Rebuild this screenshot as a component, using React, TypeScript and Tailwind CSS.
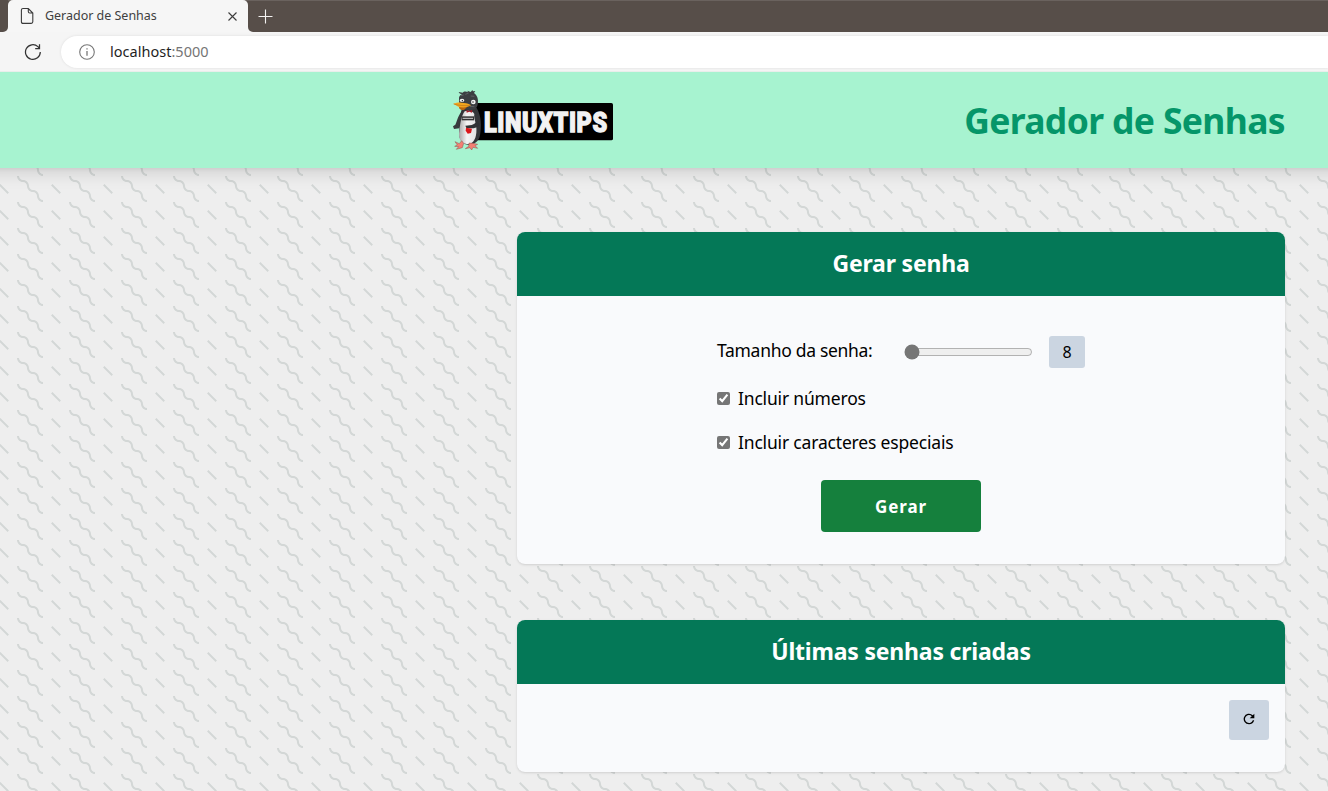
import React from "react";

function WigglePattern() {
  return (
    <svg className="absolute inset-0 h-full w-full" aria-hidden="true">
      <defs>
        <pattern id="wiggle" x="17" y="0" width="52" height="26" patternUnits="userSpaceOnUse">
          <path
            fill="#d3d7d6"
            d="M10 10c0-2.21-1.79-4-4-4-3.314 0-6-2.686-6-6h2c0 2.21 1.79 4 4 4 3.314 0 6 2.686 6 6 0 2.21 1.79 4 4 4 3.314 0 6 2.686 6 6 0 2.21 1.79 4 4 4v2c-3.314 0-6-2.686-6-6 0-2.21-1.79-4-4-4-3.314 0-6-2.686-6-6zm25.464-1.95l8.486 8.486-1.414 1.414-8.486-8.486 1.414-1.414z"
          />
        </pattern>
      </defs>
      <rect width="100%" height="100%" fill="url(#wiggle)" />
    </svg>
  );
}

function Logo() {
  return (
    <svg className="h-20 w-[190px] shrink-0 overflow-visible" viewBox="0 0 570 240">
      <defs>
        <linearGradient id="belly" x1="0" x2="1">
          <stop offset="0" stopColor="#a9a9a9" />
          <stop offset="0.45" stopColor="#f4f4f4" />
          <stop offset="1" stopColor="#e2e2e2" />
        </linearGradient>
      </defs>
      <rect x="100" y="69" width="419" height="112" rx="5" fill="#000" />
      <text
        x="132"
        y="155"
        textLength="371"
        lengthAdjust="spacingAndGlyphs"
        fill="#f2f2f2"
        stroke="#f2f2f2"
        strokeWidth="4"
        className="font-['Roboto',sans-serif] text-[84px] font-black tracking-[2px]"
      >
        LINUXTIPS
      </text>
      <path d="M66 92C52 110 50 128 46 134L39 139L42 147L58 145L68 128Z" fill="#37393c" />
      <path d="M66 84H110C124 106 125 140 120 166C116 186 100 196 84 194C62 192 54 172 58 144C60 122 60 104 66 84Z" fill="#343639" />
      <path d="M74 94C84 90 98 92 103 102C100 118 112 132 109 158C107 182 95 194 80 192C62 190 54 174 58 152C61 130 63 110 74 94Z" fill="url(#belly)" />
      <path d="M112 120C108 132 96 137 76 137L79 144C98 147 112 144 119 134Z" fill="#303235" />
      <path d="M65 109H102V121H65Z" fill="#333" />
      <path d="M68 115H99" stroke="#ccc" strokeWidth="3" />
      <path d="M78 143L96 146L93 159L83 161L77 152Z" fill="#dc171b" />
      <path d="M79 90L88 93L97 89L96 98L88 95L80 98Z" fill="#a51d28" />
      <path d="M57 53C60 44 66 43 68 43C60 42 57 39 56 36L68 38C71 34 78 33 84 37L82 32L92 36L97 30L99 34L106 33L102 39C115 48 116 66 112 77C109 87 100 91 88 90C70 90 57 78 57 64Z" fill="#3c3e42" />
      <path d="M63 47L71 45M76 43L86 39M92 48L103 49M90 79L103 80" stroke="#5e6064" strokeWidth="3" />
      <ellipse cx="66" cy="61" rx="7" ry="5" fill="#f3f3f3" />
      <circle cx="100" cy="66" r="7" fill="#f3f3f3" />
      <circle cx="67" cy="62" r="2" fill="#111" />
      <circle cx="99" cy="66" r="2" fill="#111" />
      <path d="M58 78C64 82 75 80 85 77L72 90C65 91 59 88 57 84Z" fill="#b76510" />
      <path d="M40 71C53 66 64 67 72 69C81 70 89 72 93 76C82 83 66 84 55 80Z" fill="#f3a51c" />
      <path d="M41 72C57 77 74 78 90 76" stroke="#bb741c" strokeWidth="2" fill="none" />
      <path d="M65 182L58 191L45 185L52 195L44 199L56 200L49 208L67 203L71 190Z" fill="#f47f73" stroke="#8c514c" strokeWidth="1.5" />
      <path d="M87 189L86 199L76 206L90 203L95 210L99 202L113 205L105 197L113 193L99 190Z" fill="#f47f73" stroke="#8c514c" strokeWidth="1.5" />
    </svg>
  );
}

function BrowserChrome() {
  return (
    <div className="relative z-20 shrink-0 bg-[#f5f5f5] font-['Noto_Sans',sans-serif]">
      <div className="flex h-8 bg-[#574e49] shadow-[inset_0_1px_0_#6a625e]">
        <div className="w-2 bg-[#f5f5f5]">
          <div className="h-full rounded-br-[5px] bg-[#574e49]" />
        </div>
        <div className="flex w-60 items-center rounded-t-[5px] bg-[#f6f6f6] pr-[10px] pl-3">
          <svg width="14" height="18" viewBox="0 0 14 18" fill="none" stroke="#3b3b3b" strokeWidth="1.1">
            <path d="M3 1.5H8.3L12.8 6V14.8Q12.8 16.4 11.2 16.4H3Q1.4 16.4 1.4 14.8V3.1Q1.4 1.5 3 1.5ZM8.3 1.5V4.6Q8.3 6 9.7 6H12.8" />
          </svg>
          <span className="ml-[11px] flex-1 text-[12.5px] tracking-[-0.02px] whitespace-nowrap text-[#3f3f3f]">Gerador de Senhas</span>
          <svg width="11" height="11" viewBox="0 0 11 11" stroke="#3d3d3d" strokeWidth="1.1">
            <path d="M1.5 1.5L9.5 9.5M9.5 1.5L1.5 9.5" />
          </svg>
        </div>
        <div className="flex flex-1 items-center bg-[#f5f5f5]">
          <div className="flex h-full flex-1 items-center rounded-bl-[5px] bg-[#574e49] pl-[10px] shadow-[inset_0_1px_0_#6a625e]">
            <svg width="15" height="15" viewBox="0 0 15 15" stroke="#f4f2f1" strokeWidth="1.1">
              <path d="M7.5 .5V14.5M.5 7.5H14.5" />
            </svg>
          </div>
        </div>
      </div>
      <div className="flex h-10 items-center border-b border-[#e9eeeb] pl-6">
        <svg width="18" height="18" viewBox="0 0 18 18" fill="none" stroke="#333" strokeWidth="1.25">
          <path d="M16.3 9A7.4 7.4 0 1 1 13.9 3.6L15.4 5.2M15.5 1.2V5.5H11.2" />
        </svg>
        <div className="ml-[19px] flex h-8 flex-1 items-center rounded-l-full bg-white pl-[18px] shadow-[0_0_3px_rgba(0,0,0,0.1)]">
          <svg width="16" height="16" viewBox="0 0 16 16" fill="none" stroke="#777" strokeWidth="1.1">
            <circle cx="8" cy="8" r="7.3" />
            <path d="M8 7V11.8M8 4.3V5.6" strokeWidth="1.3" />
          </svg>
          <span className="ml-[15px] text-[14.5px] tracking-[0.02px] text-[#1f1f1f]">
            localhost<span className="text-[#757575]">:5000</span>
          </span>
        </div>
      </div>
    </div>
  );
}

function Card({ title, children, className }: { title: string; children: React.ReactNode; className: string }) {
  return (
    <section className={`w-3xl shrink-0 overflow-hidden rounded-lg bg-[#f9fafc] shadow ${className}`}>
      <h2 className="flex h-16 items-center justify-center bg-[#047857] pb-0.5 text-[23px] font-bold tracking-[-0.2px] text-white">{title}</h2>
      {children}
    </section>
  );
}

function Option({ label }: { label: string }) {
  return (
    <label className="mt-4 flex items-center gap-2">
      <input type="checkbox" defaultChecked className="m-0 size-[13px] accent-[#767676]" />
      <span className="text-[17.5px] leading-7 tracking-[-0.18px] whitespace-nowrap">{label}</span>
    </label>
  );
}

export default function App() {
  return (
    <div className="flex h-[791px] w-[1328px] flex-col overflow-hidden bg-[#eee]">
      <BrowserChrome />
      <div className="relative flex-1 font-['Noto_Sans',sans-serif] text-black">
        <WigglePattern />
        <header className="relative -mx-8 flex h-24 items-center justify-between bg-[#a7f3d0] pr-[75px] pl-[472px] shadow-lg">
          <Logo />
          <h1 className="text-[35.5px] leading-10 font-bold tracking-[-0.65px] whitespace-nowrap text-[#059669]">Gerador de Senhas</h1>
        </header>
        <main className="relative flex flex-col gap-14 pt-16 pl-[517px]">
          <Card title="Gerar senha" className="h-[332px]">
            <form className="flex flex-col px-[200px] pt-10" onSubmit={(e) => e.preventDefault()}>
              <div className="flex h-8 items-center">
                <label htmlFor="size" className="w-[187px] pb-1 text-[17.5px] tracking-[-0.3px] whitespace-nowrap">Tamanho da senha:</label>
                <input id="size" type="range" min="8" max="32" defaultValue="8" className="m-0 w-[129px] accent-[#767676]" />
                <output className="ml-4 flex h-8 w-9 items-center justify-center rounded-[3px] bg-[#cbd5e1] text-base">8</output>
              </div>
              <Option label="Incluir números" />
              <Option label="Incluir caracteres especiais" />
              <button className="mt-6 h-[52px] w-40 self-center rounded bg-[#15803d] pt-0.5 text-[17px] font-bold tracking-[0.9px] text-white">Gerar</button>
            </form>
          </Card>
          <Card title="Últimas senhas criadas" className="h-[152px]">
            <div className="flex justify-end p-4">
              <button className="flex size-10 items-center justify-center rounded-[3px] bg-[#cbd5e1] pb-0.5">
                <svg width="16" height="16" viewBox="0 0 24 24" fill="#000">
                  <path d="M12 20a8 8 0 1 1 5.7-13.6L20 4v7h-7l3.2-3.2A6 6 0 1 0 17.7 14h2.1A8 8 0 0 1 12 20Z" />
                </svg>
              </button>
            </div>
          </Card>
        </main>
      </div>
    </div>
  );
}
